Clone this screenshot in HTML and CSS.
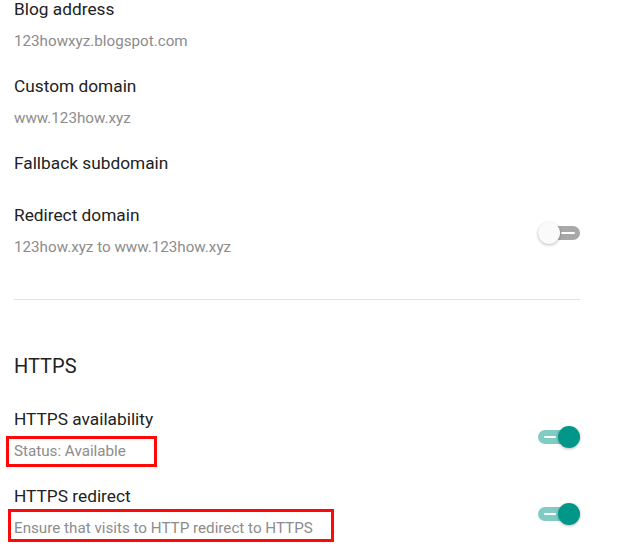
FILE: index.html
```html
<!DOCTYPE html>
<html>
<head>
<meta charset="utf-8">
<link rel="stylesheet" href="styles.css">
</head>
<body>
<div class="page">
  <div class="row r1">
    <div class="text">
      <div class="title">Blog address</div>
      <div class="sub">123howxyz.blogspot.com</div>
    </div>
  </div>
  <div class="row r2">
    <div class="text">
      <div class="title">Custom domain</div>
      <div class="sub">www.123how.xyz</div>
    </div>
  </div>
  <div class="row r3">
    <div class="text">
      <div class="title">Fallback subdomain</div>
    </div>
  </div>
  <div class="row r4">
    <div class="text">
      <div class="title">Redirect domain</div>
      <div class="sub">123how.xyz to www.123how.xyz</div>
    </div>
    <div class="toggle off"><span class="track"><span class="dash"></span></span><span class="thumb"></span></div>
  </div>
  <div class="divider"></div>
  <div class="heading">HTTPS</div>
  <div class="row r5">
    <div class="text">
      <div class="title">HTTPS availability</div>
      <div class="sub"><span class="mark mark-a">Status: Available</span></div>
    </div>
    <div class="toggle on"><span class="track"><span class="dash"></span></span><span class="thumb"></span></div>
  </div>
  <div class="row r6">
    <div class="text">
      <div class="title">HTTPS redirect</div>
      <div class="sub"><span class="mark mark-b">Ensure that visits to HTTP redirect to HTTPS</span></div>
    </div>
    <div class="toggle on"><span class="track"><span class="dash"></span></span><span class="thumb"></span></div>
  </div>
</div>
</body>
</html>
```

FILE: styles.css
```css
html, body {
  margin: 0;
  padding: 0;
  background: #ffffff;
}
body {
  font-family: Roboto, "Liberation Sans", Arial, sans-serif;
  width: 640px;
  height: 556px;
  overflow: hidden;
}
.page {
  width: 566px;
  margin: -3px 0 0 14px;
  display: flex;
  flex-direction: column;
}
.row {
  display: flex;
  align-items: center;
  justify-content: space-between;
}
.text {
  display: flex;
  flex-direction: column;
  gap: 8px;
}
.title {
  font-size: 17.3px;
  line-height: 24px;
  color: #222222;
}
.sub {
  font-size: 15.2px;
  line-height: 24px;
  color: #8c8c8c;
}
.r2 { margin-top: 21px; }
.r3 { margin-top: 21px; }
.r4 { margin-top: 28px; }
.divider {
  margin-top: 40px;
  height: 1px;
  background: #e2e2e2;
}
.heading {
  margin-top: 52px;
  font-size: 20px;
  line-height: 28px;
  color: #222222;
}
.r5 { margin-top: 27px; }
.r6 { margin-top: 21px; }

.mark {
  position: relative;
  display: inline-block;
}
.mark::after {
  content: "";
  position: absolute;
  border: 3px solid #ff0808;
  pointer-events: none;
}
.mark-a::after {
  left: -8px;
  top: -3px;
  right: -31px;
  bottom: -4px;
}
.mark-b::after {
  left: -6px;
  top: -7px;
  right: -21px;
  bottom: -2px;
}

.toggle {
  position: relative;
  width: 42px;
  height: 22px;
  flex: none;
  margin-top: 4px;
}
.track {
  position: absolute;
  left: 0;
  right: 0;
  top: 4px;
  height: 14px;
  border-radius: 7px;
}
.dash {
  position: absolute;
  top: 6px;
  height: 2px;
  background: #ffffff;
  border-radius: 1px;
}
.thumb {
  position: absolute;
  top: 0;
  width: 22px;
  height: 22px;
  border-radius: 50%;
  box-shadow: 0 1px 3px rgba(0,0,0,0.28);
}
.on .track { background: #80cbc4; }
.on .dash { left: 6px; width: 12px; }
.on .thumb { right: 0; background: #009688; }
.off .track { background: #a8a8a8; }
.off .dash { right: 5px; width: 14px; }
.off .thumb { left: 0; background: #fafafa; }
```
